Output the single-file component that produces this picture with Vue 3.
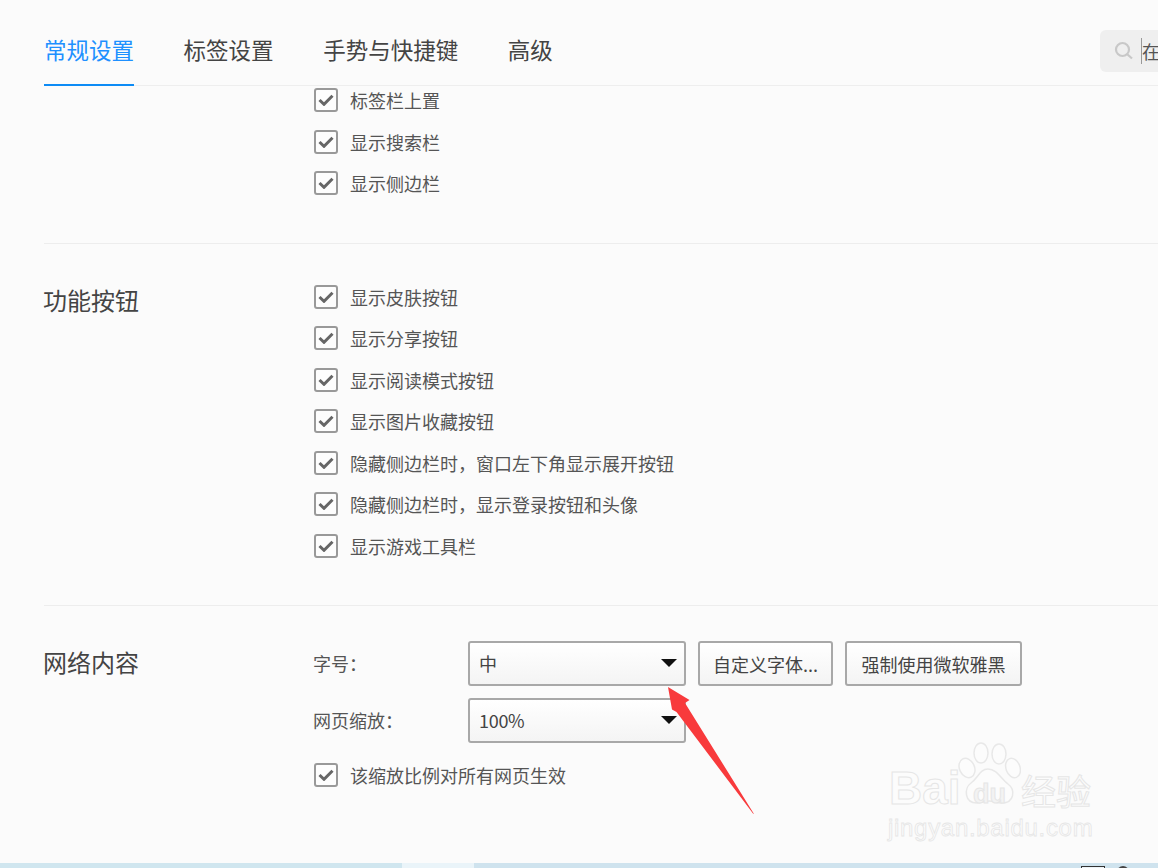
<script setup>
const tabs = [
  { label: '常规设置', active: true },
  { label: '标签设置' },
  { label: '手势与快捷键' },
  { label: '高级' }
]
const layout = ['标签栏上置', '显示搜索栏', '显示侧边栏']
const buttons = ['显示皮肤按钮', '显示分享按钮', '显示阅读模式按钮', '显示图片收藏按钮', '隐藏侧边栏时，窗口左下角显示展开按钮', '隐藏侧边栏时，显示登录按钮和头像', '显示游戏工具栏']
</script>

<template>
  <div class="page">
    <header class="tabs">
      <a v-for="t in tabs" :key="t.label" class="tab" :class="{ active: t.active }">{{ t.label }}</a>
      <div class="search">
        <svg class="glass" width="20" height="20" viewBox="0 0 20 20"><circle cx="8.5" cy="8.5" r="6.500" fill="none" stroke="#c8c8c8" stroke-width="2.200"/><path d="M13 13l5 4.500" stroke="#c8c8c8" stroke-width="2.200" fill="none"/></svg>
        <span class="caret"></span><span class="stext">在</span>
      </div>
    </header>

    <main class="content">
      <section class="section first">
        <div class="heading"></div>
        <div class="rows">
          <label v-for="l in layout" :key="l" class="check">
            <span class="box"><svg width="16" height="12" viewBox="0 0 16 12"><path d="M1.500 6l4.500 4.300L14.500 1.800" fill="none" stroke="#666" stroke-width="3"/></svg></span>{{ l }}
          </label>
        </div>
      </section>

      <section class="section second">
        <div class="heading">功能按钮</div>
        <div class="rows">
          <label v-for="l in buttons" :key="l" class="check">
            <span class="box"><svg width="16" height="12" viewBox="0 0 16 12"><path d="M1.500 6l4.500 4.300L14.500 1.800" fill="none" stroke="#666" stroke-width="3"/></svg></span>{{ l }}
          </label>
        </div>
      </section>

      <section class="section third">
        <div class="heading">网络内容</div>
        <div class="form">
          <div class="frow">
            <span class="flabel">字号：</span>
            <div class="select">中<i class="arrow"></i></div>
            <button class="btn b1">自定义字体...</button>
            <button class="btn b2">强制使用微软雅黑</button>
          </div>
          <div class="frow">
            <span class="flabel">网页缩放：</span>
            <div class="select">100%<i class="arrow"></i></div>
          </div>
          <label class="check last">
            <span class="box"><svg width="16" height="12" viewBox="0 0 16 12"><path d="M1.500 6l4.500 4.300L14.500 1.800" fill="none" stroke="#666" stroke-width="3"/></svg></span>该缩放比例对所有网页生效
          </label>
        </div>
      </section>
    </main>

    <footer class="taskbar">
      <span class="seg a"></span><span class="seg b"></span><span class="seg c"></span>
      <span class="tray-box"></span><span class="tray-dot"></span>
    </footer>

    <svg class="pointer" width="100" height="140" viewBox="0 0 100 140">
      <path d="M4 3 L25.500 16 L21 19 L90 130 L89 129.500 L12.500 28 L8 25.500 Z" fill="#f83a3c"/>
    </svg>

    <div class="mark">
      <svg class="paw" width="66" height="64" viewBox="0 0 66 64">
        <g fill="#fcfcfc" stroke="#e8e8e8" stroke-width="1.500">
          <ellipse cx="12" cy="26" rx="7.500" ry="10" transform="rotate(-25 12 26)"/>
          <ellipse cx="26" cy="11" rx="7" ry="10"/>
          <ellipse cx="44" cy="12" rx="7" ry="10"/>
          <ellipse cx="58" cy="26" rx="7" ry="10" transform="rotate(-20 58 26)"/>
          <path d="M33 27c-8 0-10 9-17 14-7 5-7 20 6 20 6 0 7-2 12-2s7 2 13 2c12 0 14-13 6-19-7-5-11-15-20-15z"/>
        </g>
      </svg>
      <span class="bai">Bai</span><span class="du">du</span><span class="jy">经验</span>
      <span class="url">jingyan.baidu.com</span>
    </div>
  </div>
</template>

<style>
html, body { margin: 0; background: #fbfbfb; overflow: hidden; }
</style>

<style scoped>
.page {
  position: relative;
  width: 1158px;
  height: 868px;
  overflow: hidden;
  display: flex;
  flex-direction: column;
  background: #fbfbfb;
  font-family: "Noto Sans CJK SC", "Liberation Sans", sans-serif;
  color: #555;
}
.tabs {
  flex: none;
  height: 85px;
  margin-left: 44px;
  display: flex;
  align-items: stretch;
  gap: 49.600px;
  border-bottom: 1px solid #eeeeee;
  position: relative;
  z-index: 1;
  background: #fbfbfb;
}
.tab {
  font-size: 22.500px;
  line-height: 98px;
  height: 85px;
  color: #444;
  box-sizing: border-box;
}
.tab.active {
  color: #1e90ff;
  border-bottom: 2px solid #0d8bf5;
  height: 86px;
}
.search {
  margin-left: auto;
  margin-top: 30px;
  width: 58px;
  height: 42px;
  background: #efefef;
  border-radius: 6px 0 0 6px;
  display: flex;
  align-items: center;
  padding-left: 14px;
  box-sizing: border-box;
  overflow: hidden;
}
.glass { flex: none; }
.caret { flex: none; width: 1px; height: 26px; background: #999; margin-left: 7px; }
.stext { font-size: 18px; color: #555; white-space: nowrap; }
.content { flex: 1; }
.section {
  display: flex;
  margin-left: 44px;
  border-bottom: 1px solid #ededed;
  box-sizing: border-box;
}
.section.first { height: 158px; }
.section.first .rows { margin-top: -6.500px; }
.section.second { height: 362px; padding-top: 32px; }
.section.third { border-bottom: 0; padding-top: 35px; }
.heading {
  width: 270px;
  flex: none;
  font-size: 24px;
  line-height: 32px;
  color: #444;
  text-indent: -1px;
}
.second .heading { margin-top: 8px; }
.third .heading { margin-top: 5px; }
.rows { display: flex; flex-direction: column; }
.check {
  height: 41.500px;
  display: flex;
  align-items: center;
  font-size: 18px;
  color: #555;
}
.check.last { margin-top: -1px; }
.box {
  width: 24px;
  height: 24px;
  box-sizing: border-box;
  border: 2px solid #999;
  border-radius: 3px;
  background: #fdfdfd;
  margin-right: 12px;
  display: flex;
  align-items: center;
  justify-content: center;
  flex: none;
}
.form { display: flex; flex-direction: column; }
.frow { display: flex; align-items: center; height: 45px; margin-bottom: 12px; }
.flabel { width: 154px; flex: none; font-size: 18px; color: #555; padding-bottom: 2px; text-indent: -1px; }
.select {
  position: relative;
  width: 218px;
  height: 45px;
  box-sizing: border-box;
  border: 2px solid #a8a8a8;
  border-radius: 3px;
  background: linear-gradient(#ffffff, #f4f4f4);
  padding-left: 9px;
  font-size: 18px;
  line-height: 41px;
  letter-spacing: -0.300px;
  color: #444;
}
.arrow {
  position: absolute;
  right: 7px;
  top: 16px;
  width: 0;
  height: 0;
  border-left: 8px solid transparent;
  border-right: 8px solid transparent;
  border-top: 8px solid #111;
}
.btn {
  height: 45px;
  margin-left: 12px;
  box-sizing: border-box;
  border: 2px solid #a8a8a8;
  border-radius: 3px;
  background: linear-gradient(#ffffff, #f4f4f4);
  font-family: inherit;
  font-size: 18px;
  color: #444;
  padding: 0;
  white-space: nowrap;
}
.b1 { width: 135px; }
.b2 { width: 177px; }
.taskbar {
  flex: none;
  height: 5px;
  display: flex;
  position: relative;
  background: #d0e6ef;
}
.seg.a { width: 402px; background: #d0e6ef; }
.seg.b { width: 72px; background: #eaf4f9; }
.seg.c { flex: 1; background: #cfe3ee; }
.tray-box {
  position: absolute;
  left: 1081px;
  top: 3px;
  width: 24px;
  height: 6px;
  box-sizing: border-box;
  border: 1px solid #333;
  background: #eef4f8;
}
.tray-dot {
  position: absolute;
  left: 1117px;
  top: 3px;
  width: 12px;
  height: 12px;
  border-radius: 50%;
  background: #444;
}
.pointer { position: absolute; left: 664px; top: 684px; }
.mark {
  position: absolute;
  left: 888px;
  top: 742px;
  width: 210px;
  height: 100px;
  color: #fcfcfc;
}
.paw { position: absolute; left: 67px; top: 0; }
.bai, .du, .jy, .url {
  position: absolute;
  font-family: "Liberation Sans", sans-serif;
  -webkit-text-stroke: 1px #e6e6e6;
}
.bai { left: 1px; top: 21px; font-size: 46px; line-height: 50px; font-weight: 700; }
.du { left: 85px; top: 39px; font-size: 27px; line-height: 26px; font-weight: 700; color: #f3f3f3; }
.jy { left: 133px; top: 28px; font-size: 35px; line-height: 40px; font-family: "Noto Sans CJK SC", sans-serif; }
.url { left: 0; top: 72px; font-size: 24px; line-height: 28px; letter-spacing: 0.700px; -webkit-text-stroke-width: 0.800px; }
</style>
